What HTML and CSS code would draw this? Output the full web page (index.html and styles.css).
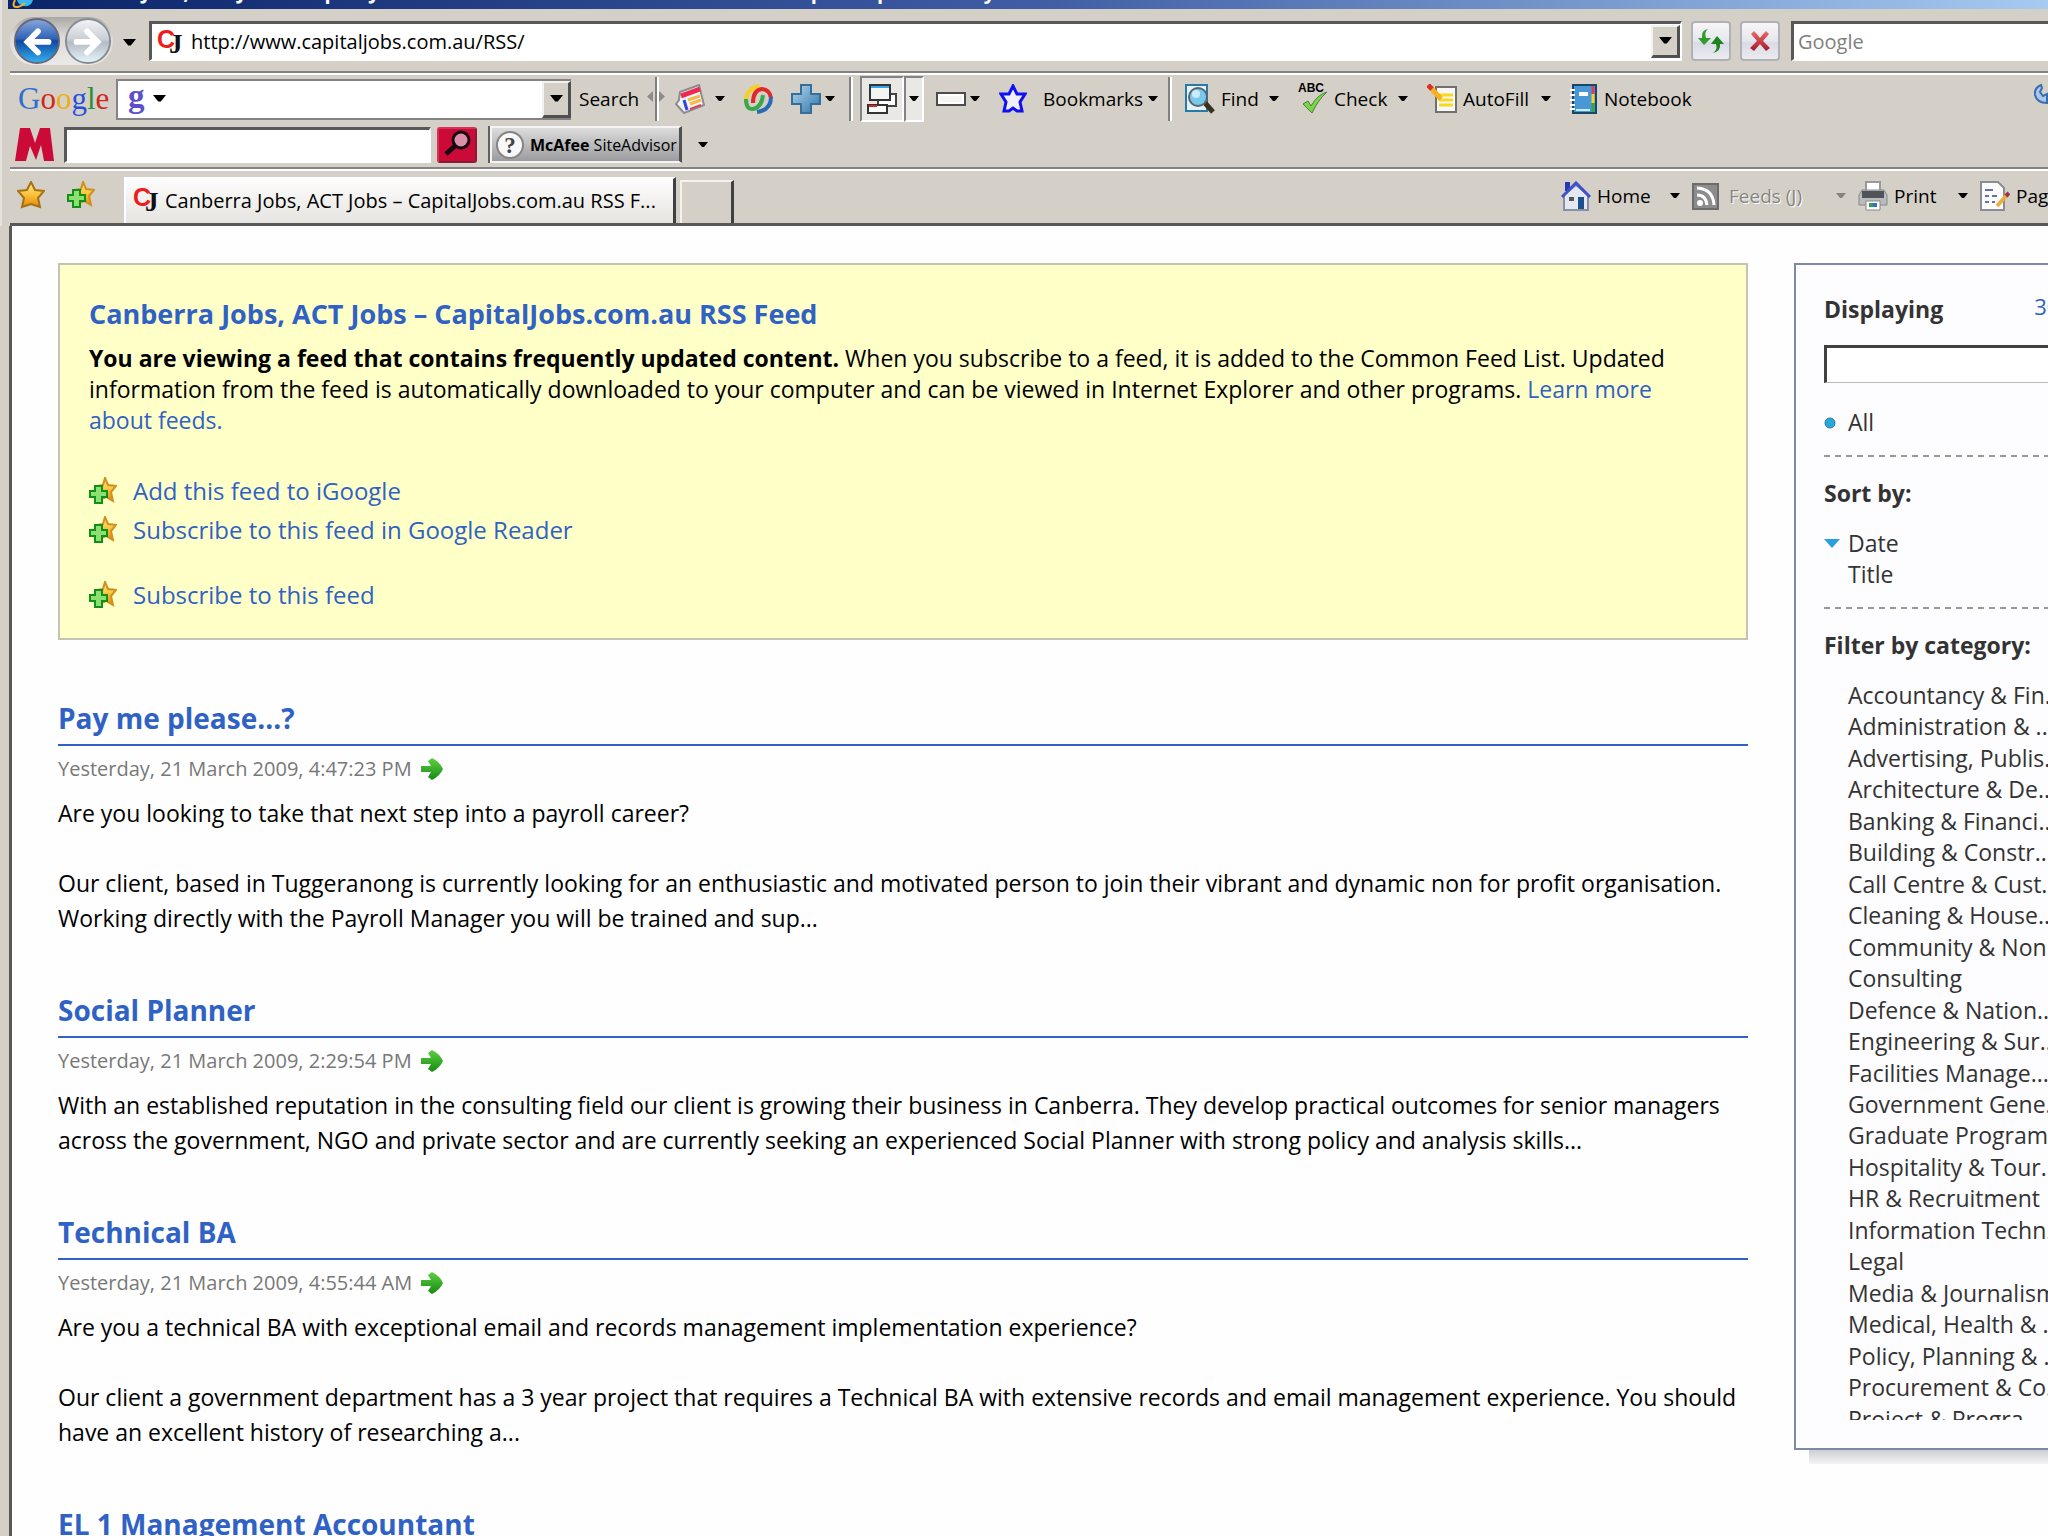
FILE: index.html
```
<!DOCTYPE html>
<html lang="en" dir="ltr">
  <head>
    <meta charset="utf-8">
    <title>Canberra Jobs, ACT Jobs – CapitalJobs.com.au RSS Feed</title>
    <link rel="stylesheet" href="styles.css">
  </head>
  <body>
    <svg class="defs" aria-hidden="true">
      <defs>
        <linearGradient id="gold" x1="0" y1="0" x2="0" y2="1"><stop offset="0" stop-color="#fff3a0"/><stop offset="0.5" stop-color="#fbc23a"/><stop offset="1" stop-color="#e08a10"/></linearGradient>
        <linearGradient id="blueBall" x1="0" y1="0" x2="0" y2="1"><stop offset="0" stop-color="#8ba9dc"/><stop offset="0.45" stop-color="#2f62b8"/><stop offset="0.5" stop-color="#0f47a0"/><stop offset="1" stop-color="#35b4f4"/></linearGradient>
        <linearGradient id="greyBall" x1="0" y1="0" x2="0" y2="1"><stop offset="0" stop-color="#f4f5f8"/><stop offset="0.48" stop-color="#c9ccd4"/><stop offset="0.52" stop-color="#b4bac4"/><stop offset="1" stop-color="#e6f6fc"/></linearGradient>
        <linearGradient id="plusBlue" x1="0" y1="0" x2="1" y2="1"><stop offset="0" stop-color="#b4d8ee"/><stop offset="1" stop-color="#2f74a8"/></linearGradient>
        <linearGradient id="greenArrow" x1="0" y1="0" x2="0" y2="1"><stop offset="0" stop-color="#5fd040"/><stop offset="1" stop-color="#168a14"/></linearGradient>
        <linearGradient id="redX" x1="0" y1="0" x2="0" y2="1"><stop offset="0" stop-color="#f06a68"/><stop offset="1" stop-color="#a01c28"/></linearGradient>
        <symbol id="caret" viewBox="0 0 10 6"><path d="M0 0H10L6 5H4Z" fill="currentColor"/></symbol>
        <symbol id="addstar" viewBox="0 0 28 28">
          <path d="M16 1L19 8L27 9L22 15L24 24L17 20L10 23L12 15L8 9L14 8Z" fill="url(#gold)" stroke="#d09020" stroke-width="2"/>
          <path d="M6 9H13V14H18V20H13V26H6V20H1V14H6Z" fill="#8ce070" stroke="#0f9018" stroke-width="2"/>
        </symbol>
        <symbol id="cj" viewBox="0 0 26 28">
          <text x="0" y="20" font-family="Liberation Sans Narrow, Liberation Sans" font-weight="bold" font-size="25" fill="#ee1c1c">C</text>
          <text x="12" y="25" font-family="Liberation Serif" font-weight="bold" font-size="27" fill="#111">J</text>
        </symbol>
        <symbol id="go" viewBox="0 0 24 24"><path d="M1 9H11L8 4L12 1Q20 5 23 12Q20 19 12 23L8 20L11 15H1Z" fill="url(#greenArrow)"/></symbol>
      </defs>
    </svg>

    <header class="chrome">
      <div class="titlebar">
        <svg class="ielogo" viewBox="0 0 24 9"><path d="M5 0H21Q19 7 12 6Q6 5 5 0Z" fill="#38b4f0"/><path d="M3 0Q-1 8 6 7Q10 6 13 3" fill="none" stroke="#f0b030" stroke-width="2"/></svg>
        <span class="titletext">Canberra Jobs, ACT Jobs – CapitalJobs.com.au RSS Feed – Windows Internet Explorer provided by</span>
      </div>

      <div class="navrow">
        <div class="travel">
          <button class="plain" aria-label="Back"><svg width="48" height="48" viewBox="0 0 50 50"><circle cx="25" cy="25" r="23" fill="url(#blueBall)" stroke="#667" stroke-width="2"/><path d="M37 26H16M26 15L15 26L26 37" fill="none" stroke="#fff" stroke-width="6" stroke-linecap="round"/></svg></button>
          <button class="plain" aria-label="Forward"><svg width="48" height="48" viewBox="0 0 50 50"><circle cx="25" cy="25" r="23" fill="url(#greyBall)" stroke="#888d94" stroke-width="2"/><path d="M13 26H34M24 15L35 26L24 37" fill="none" stroke="#fff" stroke-width="6" stroke-linecap="round"/></svg></button>
        </div>
        <button class="plain recent" aria-label="Recent pages"><svg class="caret big"><use href="#caret"/></svg></button>
        <div class="field address">
          <svg width="26" height="28"><use href="#cj"/></svg>
          <input class="bare" type="text" value="http://www.capitaljobs.com.au/RSS/" aria-label="Address">
          <button class="drop" aria-label="Show addresses"><svg class="caret big"><use href="#caret"/></svg></button>
        </div>
        <div class="navright">
          <button class="soft" aria-label="Refresh"><svg width="28" height="26" viewBox="0 0 28 26"><path d="M11 1Q7 4 9 10H14L7 17L1 10H5Q4 2 11 1Z" fill="#2f9c2c"/><path d="M16 25Q21 22 19 16H14L20 8L27 16H23Q24 23 16 25Z" fill="#1e8420"/></svg></button>
          <button class="soft" aria-label="Stop"><svg width="22" height="22" viewBox="0 0 22 22"><path d="M2 4L5 1Q9 5 11 8Q13 5 17 1L20 4L14 11L21 18L17 21L11 14L5 21L1 18L8 11Z" fill="url(#redX)"/></svg></button>
          <div class="field websearch"><input class="bare" type="text" placeholder="Google" aria-label="Search"></div>
        </div>
      </div>

      <div class="googlerow">
        <span class="glogo"><b class="gb">G</b><b class="gr">o</b><b class="gy">o</b><b class="gb2">g</b><b class="gg">l</b><b class="gr">e</b></span>
        <div class="gcombo">
          <span class="gmark">g</span><svg class="caret big"><use href="#caret"/></svg>
          <input class="bare" type="text" aria-label="Google search">
          <button class="drop" aria-label="Search history"><svg class="caret big"><use href="#caret"/></svg></button>
        </div>
        <button class="tool t-search">Search</button>
        <svg class="grip" width="18" height="44" viewBox="0 0 18 44"><path d="M9 0V44" stroke="#808080" stroke-width="2"/><path d="M11 0V44" stroke="#fff" stroke-width="2"/><path d="M6 14V25L0 19.500Z M12 14V25L18 19.500Z" fill="#8c8c8c"/></svg>
        <button class="tool t-news" aria-label="News"><svg width="30" height="30" viewBox="0 0 30 30"><path d="M5 8L24 1L29 21L9 29L1 20L4 16Z" fill="#f4f4f6" stroke="#8c8c90" stroke-width="2"/><path d="M6 12L25 5" stroke="#f02850" stroke-width="5"/><path d="M9 16L12 26" stroke="#3048e0" stroke-width="3"/><path d="M13 16L25 12M15 20L26 16" stroke="#f8b848" stroke-width="3"/><path d="M15 25L26 21" stroke="#e04060" stroke-width="2"/></svg><svg class="caret"><use href="#caret"/></svg></button>
        <button class="tool t-swirl" aria-label="Gadgets"><svg width="30" height="30" viewBox="0 0 30 30" fill="none" stroke-width="4"><path d="M16 2Q3 5 3 17" stroke="#f6d020"/><path d="M10 19Q10 6 19 5Q27 6 28 14" stroke="#e02828"/><path d="M28 13Q28 26 14 28" stroke="#2868b8"/><path d="M3 15Q3 26 10 25Q19 23 20 11" stroke="#38a848"/></svg></button>
        <button class="tool t-plus" aria-label="Add"><svg width="30" height="30" viewBox="0 0 30 30"><path d="M10 1H20V10H29V20H20V29H10V20H1V10H10Z" fill="url(#plusBlue)" stroke="#356f98" stroke-width="2"/></svg><svg class="caret"><use href="#caret"/></svg></button>
        <span class="vline"></span>
        <span class="pressed">
          <button class="sunk" aria-label="Popups"><svg width="30" height="30" viewBox="0 0 30 30"><path d="M11 10H29V22H11Z" fill="#fff" stroke="#444" stroke-width="2"/><path d="M1 21H20V29H1Z" fill="#fff" stroke="#333" stroke-width="2"/><path d="M2 22H10" stroke="#e02020" stroke-width="2"/><path d="M3 1H23V16H3Z" fill="#f4f4f4" stroke="#333" stroke-width="2"/><path d="M4 3H22" stroke="#30a8e0" stroke-width="2"/></svg></button>
          <button class="sunk thin" aria-label="Popup options"><svg class="caret"><use href="#caret"/></svg></button>
        </span>
        <button class="tool t-rect" aria-label="PageRank"><svg width="30" height="14" viewBox="0 0 30 14"><path d="M1 1H29V13H1Z" fill="#f4f4f0" stroke="#4c4c4c" stroke-width="2"/><path d="M3 3H27V11H3Z" fill="none" stroke="#fff" stroke-width="2"/></svg><svg class="caret"><use href="#caret"/></svg></button>
        <button class="tool t-book"><svg width="28" height="30" viewBox="0 0 28 30"><path d="M14 2L18 10H26L21 18L23 27H18L14 24L10 27H5L7 18L2 10H10Z" fill="#f0f0f8" stroke="#1010f4" stroke-width="3"/></svg><span>Bookmarks</span><svg class="caret"><use href="#caret"/></svg></button>
        <span class="vline"></span>
        <button class="tool t-find"><svg width="30" height="30" viewBox="0 0 30 30"><path d="M1 1H22V27H1Z" fill="#e4f2fa" stroke="#2878a8" stroke-width="2"/><path d="M20 19L28 28" stroke="#3a3020" stroke-width="5"/><circle cx="13" cy="13" r="9" fill="#78c8f0" stroke="#5c6468" stroke-width="2"/><circle cx="11" cy="10" r="4" fill="#c8ecfc"/></svg><span>Find</span><svg class="caret"><use href="#caret"/></svg></button>
        <button class="tool t-check"><svg width="30" height="32" viewBox="0 0 30 32"><text x="0" y="9" font-family="Liberation Sans" font-weight="bold" font-size="12">ABC</text><path d="M5 21L10 18L13 23Q20 11 29 9Q20 17 14 30Z" fill="#78d848" stroke="#4c7c3c" stroke-width="1"/></svg><span>Check</span><svg class="caret"><use href="#caret"/></svg></button>
        <button class="tool t-fill"><svg width="30" height="30" viewBox="0 0 30 30"><path d="M9 3H29V28H9Z" fill="#f8f8f4" stroke="#707070" stroke-width="2"/><path d="M12 11H26M12 16H26M12 21H26" stroke="#f8d820" stroke-width="3"/><path d="M3 3L14 15" stroke="#f8b020" stroke-width="5"/><path d="M1 1L5 5" stroke="#d83028" stroke-width="5"/></svg><span>AutoFill</span><svg class="caret"><use href="#caret"/></svg></button>
        <button class="tool t-note"><svg width="28" height="30" viewBox="0 0 28 30"><path d="M3 1H26V29H3Z" fill="#4898d8" stroke="#184868" stroke-width="2"/><path d="M23 2V10" stroke="#e03c60" stroke-width="3"/><path d="M23 10V19" stroke="#f8d028" stroke-width="3"/><path d="M23 19V28" stroke="#38a048" stroke-width="3"/><path d="M9 10H18" stroke="#fff" stroke-width="4"/><path d="M0 6H5M0 11H5M0 16H5M0 21H5M0 25H5" stroke="#fff" stroke-width="2"/><path d="M6 26H20" stroke="#c8f0fc" stroke-width="2"/></svg><span>Notebook</span></button>
        <button class="plain wrench" aria-label="Settings"><svg width="14" height="24" viewBox="0 0 14 24"><path d="M7 2Q0 5 1 12Q3 20 13 20V11L9 13L6 9L8 5Z" fill="#a8c8ec" stroke="#3c6cb0" stroke-width="2"/></svg></button>
      </div>

      <div class="mcrow">
        <svg width="40" height="34" viewBox="0 0 40 34"><path d="M5 0H15L20 15L25 0H35L39 33H29L26 17L21 32L15 18L11 33H0Z" fill="#cc0a38"/></svg>
        <div class="field mcfield"><input class="bare" type="text" aria-label="McAfee search"></div>
        <button class="mcgo" aria-label="Secure search"><svg width="30" height="28" viewBox="0 0 30 28"><circle cx="18" cy="11" r="8" fill="#dc90a8" stroke="#180810" stroke-width="3"/><path d="M12 17L3 25" stroke="#180810" stroke-width="5"/></svg></button>
        <button class="advisor"><svg width="30" height="32" viewBox="0 0 30 32"><circle cx="15" cy="16" r="13" fill="#f8f8f8" stroke="#848484" stroke-width="2"/><text x="15" y="24" text-anchor="middle" font-family="Liberation Serif" font-weight="bold" font-size="23" fill="#444">?</text></svg><span><b>McAfee</b> SiteAdvisor</span></button>
        <button class="plain mcmore" aria-label="SiteAdvisor menu"><svg class="caret"><use href="#caret"/></svg></button>
      </div>

      <div class="tabrow">
        <button class="plain fav" aria-label="Favorites"><svg width="28" height="28" viewBox="0 0 28 28"><path d="M14 1L18 9L27 10L21 17L23 26L14 23L5 26L7 17L1 10L10 9Z" fill="url(#gold)" stroke="#a87010" stroke-width="2"/></svg></button>
        <button class="plain addfav" aria-label="Add to Favorites"><svg width="28" height="28"><use href="#addstar"/></svg></button>
        <button class="tab"><svg width="26" height="28"><use href="#cj"/></svg><span>Canberra Jobs, ACT Jobs – CapitalJobs.com.au RSS F...</span></button>
        <button class="newtab" aria-label="New tab"></button>
        <div class="commands">
          <button class="tool c-home"><svg width="30" height="30" viewBox="0 0 30 30"><path d="M4 1H9V10H4Z" fill="#2838b0"/><path d="M3 14L15 4L27 14V29H3Z" fill="#e4e8f0" stroke="#8890a8" stroke-width="2"/><path d="M1 16L15 2L29 16" fill="none" stroke="#3c50c8" stroke-width="3"/><path d="M17 16H23V28H17Z" fill="#1c5090"/><path d="M8 16H13V20H8Z" fill="#555"/></svg><span>Home</span><svg class="caret"><use href="#caret"/></svg></button>
          <button class="tool c-feeds" disabled><svg width="28" height="28" viewBox="0 0 28 28"><path d="M1 2H26V27H1Z" fill="#8c8c8c" stroke="#6c6c6c" stroke-width="2"/><circle cx="8" cy="21" r="3" fill="#fff"/><path d="M5 13Q14 13 15 23M5 6Q21 7 22 23" fill="none" stroke="#fff" stroke-width="3"/></svg><span>Feeds (J)</span><svg class="caret"><use href="#caret"/></svg></button>
          <button class="tool c-print"><svg width="30" height="30" viewBox="0 0 30 30"><path d="M8 1H22V12H8Z" fill="#fff" stroke="#999" stroke-width="2"/><path d="M4 9H26L29 14V24H1V14Z" fill="#b8bcc0" stroke="#84888c" stroke-width="1"/><path d="M4 10H26V17H4Z" fill="#505458"/><path d="M8 20H22V29H8Z" fill="#fff" stroke="#888" stroke-width="1"/><path d="M11 24H15" stroke="#30a050" stroke-width="4"/><path d="M15 24H19" stroke="#3070d0" stroke-width="4"/></svg><span>Print</span><svg class="caret"><use href="#caret"/></svg></button>
          <button class="tool c-page"><svg width="30" height="30" viewBox="0 0 30 30"><path d="M1 1H18L24 7V29H1Z" fill="#fbfbfb" stroke="#8c8c94" stroke-width="2"/><path d="M5 9H13M5 15H9M12 15H17M5 21H9M12 21H15" stroke="#6870a8" stroke-width="2"/><path d="M17 25L27 14" stroke="#e8b040" stroke-width="4"/><path d="M26 15L29 12" stroke="#a03048" stroke-width="4"/></svg><span>Page</span></button>
        </div>
      </div>
    </header>

    <div class="page">
      <main class="content">
        <section class="feedbox">
          <h1>Canberra Jobs, ACT Jobs – CapitalJobs.com.au RSS Feed</h1>
          <p><b>You are viewing a feed that contains frequently updated content.</b> When you subscribe to a feed, it is added to the Common Feed List. Updated information from the feed is automatically downloaded to your computer and can be viewed in Internet Explorer and other programs. <a href="#">Learn more about feeds.</a></p>
          <ul class="sublinks">
            <li><svg width="28" height="28"><use href="#addstar"/></svg><a href="#">Add this feed to iGoogle</a></li>
            <li><svg width="28" height="28"><use href="#addstar"/></svg><a href="#">Subscribe to this feed in Google Reader</a></li>
            <li class="last"><svg width="28" height="28"><use href="#addstar"/></svg><a href="#">Subscribe to this feed</a></li>
          </ul>
        </section>

        <article>
          <h2><a href="#">Pay me please...?</a></h2>
          <div class="date">Yesterday, 21 March 2009, 4:47:23 PM <a href="#" aria-label="Open item"><svg width="24" height="24"><use href="#go"/></svg></a></div>
          <p>Are you looking to take that next step into a payroll career?<br><br>Our client, based in Tuggeranong is currently looking for an enthusiastic and motivated person to join their vibrant and dynamic non for profit organisation. Working directly with the Payroll Manager you will be trained and sup...</p>
        </article>
        <article>
          <h2><a href="#">Social Planner</a></h2>
          <div class="date">Yesterday, 21 March 2009, 2:29:54 PM <a href="#" aria-label="Open item"><svg width="24" height="24"><use href="#go"/></svg></a></div>
          <p>With an established reputation in the consulting field our client is growing their business in Canberra. They develop practical outcomes for senior managers across the government, NGO and private sector and are currently seeking an experienced Social Planner with strong policy and analysis skills...</p>
        </article>
        <article>
          <h2><a href="#">Technical BA</a></h2>
          <div class="date">Yesterday, 21 March 2009, 4:55:44 AM <a href="#" aria-label="Open item"><svg width="24" height="24"><use href="#go"/></svg></a></div>
          <p>Are you a technical BA with exceptional email and records management implementation experience?<br><br>Our client a government department has a 3 year project that requires a Technical BA with extensive records and email management experience. You should have an excellent history of researching a...</p>
        </article>
        <article>
          <h2><a href="#">EL 1 Management Accountant</a></h2>
        </article>
      </main>

      <aside class="side">
        <div class="panel">
          <div class="displaying"><h3><label for="filter">Displaying</label></h3><span>30 / 30</span></div>
          <input class="filter" id="filter" type="text">
          <a class="opt all" href="#"><svg width="12" height="12" viewBox="0 0 12 12"><circle cx="6" cy="6" r="5" fill="#28a8d8" stroke="#2878b0" stroke-width="1"/></svg>All</a>
          <hr>
          <h3>Sort by:</h3>
          <a class="opt" href="#"><svg width="16" height="9" viewBox="0 0 16 9"><path d="M0 0H16L8 9Z" fill="#28a0dc"/></svg>Date</a>
          <a class="opt" href="#">Title</a>
          <hr>
          <h3>Filter by category:</h3>
          <div class="clip">
            <ul class="cats">
              <li>Accountancy &amp; Fin...</li>
              <li>Administration &amp; ...</li>
              <li>Advertising, Publis...</li>
              <li>Architecture &amp; De...</li>
              <li>Banking &amp; Financi...</li>
              <li>Building &amp; Constr...</li>
              <li>Call Centre &amp; Cust...</li>
              <li>Cleaning &amp; House...</li>
              <li>Community &amp; Non...</li>
              <li>Consulting</li>
              <li>Defence &amp; Nation...</li>
              <li>Engineering &amp; Sur...</li>
              <li>Facilities Manage...</li>
              <li>Government Gene...</li>
              <li>Graduate Program...</li>
              <li>Hospitality &amp; Tour...</li>
              <li>HR &amp; Recruitment</li>
              <li>Information Techn...</li>
              <li>Legal</li>
              <li>Media &amp; Journalism</li>
              <li>Medical, Health &amp; ...</li>
              <li>Policy, Planning &amp; ...</li>
              <li>Procurement &amp; Co...</li>
              <li>Project &amp; Progra...</li>
            </ul>
          </div>
        </div>
        <div class="shadow"></div>
      </aside>
    </div>
  </body>
</html>
```
FILE: styles.css
```
*{box-sizing: border-box;}
html, body{
  height: 100%;
}
body{
  margin: 0;
  overflow: hidden;
  background-color: #d4d0c8;
  color: #000;
  font-family: "Open Sans", "Noto Sans", sans-serif;
  font-size: 23px;
  display: flex;
  flex-direction: column;
}
button, input{
  font-family: inherit;
  font-size: inherit;
  color: inherit;
}
svg{
  flex: none;
}
a{
  color: #2f62c4;
  text-decoration: none;
}
.defs{
  position: absolute;
  width: 0;
  height: 0;
}

/* browser toolbars */
.chrome{
  flex: none;
  padding-left: 8px;
  font-size: 20px;
  white-space: nowrap;
  border-left: 2px solid #e4e2dc;
}
.titlebar{
  height: 9px;
  margin-left: -2px;
  padding-left: 4px;
  overflow: hidden;
  display: flex;
  align-items: flex-end;
  gap: 8px;
  background: linear-gradient(90deg, #0a246a, #3f5ca4 50%, #a6caf0);
  color: #fff;
}
.ielogo{
  width: 24px;
  height: 9px;
}
.titletext{
  font-weight: bold;
  line-height: 34px;
}
.plain, .tool{
  border: none;
  padding: 0;
  background: none;
  display: flex;
  align-items: center;
}
.tool{font-size: 19px;}
.caret{
  width: 10px;
  height: 6px;
}
.caret.big{
  width: 13px;
  height: 8px;
}
.bare{
  flex: 1;
  min-width: 0;
  border: none;
  outline: none;
  padding: 0;
  background: none;
}
.bare::placeholder{
  color: #808080;
  opacity: 1;
}
.field{
  display: flex;
  align-items: center;
  background-color: #fff;
  border: 2px solid #fff;
  border-top: 3px solid #585858;
  border-left: 3px solid #585858;
}
.drop{
  width: 29px;
  height: 33px;
  padding: 0;
  background-color: #d4d0c8;
  border: 2px solid #f4f2ee;
  border-right: 3px solid #505050;
  border-bottom: 3px solid #505050;
  display: flex;
  align-items: center;
  justify-content: center;
}
.navrow{
  height: 64px;
  padding-top: 2px;
  display: flex;
  align-items: center;
  border-bottom: 2px solid #848280;
  box-shadow: 0 2px #fff;
}
.travel{
  display: flex;
  gap: 3px;
  padding: 0 1px 0 3px;
  border-radius: 26px;
  background: linear-gradient(#a8a8a6, #dcdad6 40%, #eceae8);
}
.recent{
  margin: 3px 13px 0 10px;
}
.address{
  flex: 1;
  height: 40px;
  gap: 8px;
  padding-left: 5px;
}
.navright{
  width: 366px;
  display: flex;
  align-items: center;
  gap: 9px;
  padding-left: 9px;
  overflow: hidden;
}
.soft{
  flex: none;
  width: 40px;
  height: 40px;
  padding: 0;
  border: 2px solid #b0b0b6;
  border-radius: 4px;
  background: linear-gradient(#f6f6f8, #e6e7ee 50%, #d8dae6 55%, #ececf0);
  display: flex;
  align-items: center;
  justify-content: center;
}
.websearch{
  flex: 1;
  height: 40px;
  margin-left: 2px;
  padding-left: 4px;
  border-right: none;
}
.googlerow{
  height: 50px;
  padding-top: 2px;
  display: flex;
  align-items: center;
}
.glogo{
  width: 106px;
  padding-left: 8px;
  font-family: "Liberation Serif", serif;
  font-size: 31px;
  line-height: 40px;
}
.glogo b{font-weight: normal;}
.gb{color: #2f6fd0;}
.gb2{color: #2850d8;}
.gr{color: #d02820;}
.gy{color: #eab010;}
.gg{color: #2c9038;}
.gcombo{
  width: 455px;
  height: 41px;
  padding-left: 10px;
  background-color: #fff;
  border: 2px solid #848284;
  border-right: none;
  display: flex;
  align-items: center;
  gap: 8px;
}
.gcombo .drop{
  height: 37px;
}
.gmark{
  font-family: "Liberation Serif", serif;
  font-size: 33px;
  font-weight: bold;
  line-height: 30px;
  padding-bottom: 6px;
  color: #5b50cc;
}
.t-search{
  width: 68px;
  margin-left: 8px;
}
.grip{margin-right: 10px;}
.t-news{width: 68px; gap: 10px;}
.t-swirl{width: 48px;}
.t-plus{width: 58px; gap: 4px;}
.t-rect{width: 63px; gap: 4px;}
.t-book{width: 169px;}
.t-book span{margin: 0 5px 0 16px;}
.t-find{width: 113px;}
.t-check{width: 129px;}
.t-fill{width: 143px;}
.t-find span, .t-check span, .t-fill span, .t-note span{
  flex: 1;
  margin-left: 6px;
  text-align: left;
}
.t-find .caret, .t-check .caret, .t-fill .caret{margin-right: 19px;}
.t-note{width: 130px;}
.vline{
  width: 4px;
  height: 44px;
  border-left: 2px solid #808080;
  border-right: 2px solid #fff;
}
.pressed{
  display: flex;
  margin: 0 12px 0 7px;
}
.sunk{
  width: 44px;
  height: 46px;
  padding: 0;
  background-color: #eae8e4;
  border: 2px solid #fff;
  border-top-color: #848284;
  border-left-color: #848284;
  display: flex;
  align-items: center;
  justify-content: center;
}
.sunk.thin{width: 20px;}
.vline + .t-find{margin-left: 13px;}
.wrench{
  margin-left: auto;
  margin-bottom: 8px;
}
.mcrow{
  height: 46px;
  padding: 0 0 1px 5px;
  display: flex;
  align-items: center;
  border-bottom: 2px solid #848280;
  box-shadow: 0 2px #fff;
}
.mcfield{
  width: 367px;
  height: 36px;
  margin-left: 9px;
}
.mcgo{
  width: 40px;
  height: 36px;
  margin-left: 6px;
  padding: 0 0 0 2px;
  border: 2px outset #d83058;
  border-radius: 3px;
  background-color: #cc0a38;
}
.advisor{
  width: 192px;
  height: 37px;
  margin-left: 13px;
  padding: 0 4px 0 3px;
  border: 2px solid #f4f4f4;
  border-right: 3px solid #505050;
  box-shadow: -2px 0 #606060;
  background: linear-gradient(#dcdcdc, #9c9c9e);
  display: flex;
  align-items: center;
  gap: 5px;
  font-size: 16px;
}
.mcmore{margin-left: 16px;}
.tabrow{
  height: 57px;
  padding-left: 7px;
  display: flex;
  align-items: flex-end;
  border-bottom: 3px solid #585858;
}
.fav, .addfav{
  margin-bottom: 14px;
}
.addfav{margin-left: 22px;}
.tab{
  width: 552px;
  height: 46px;
  margin-left: 29px;
  padding: 0 3px 2px 7px;
  border: 2px solid #fff;
  border-right: 3px solid #404040;
  border-bottom: none;
  background: linear-gradient(#fdfdfd, #e6e4e0);
  display: flex;
  align-items: center;
  gap: 6px;
}
.newtab{
  width: 54px;
  height: 43px;
  margin-left: 4px;
  background-color: #d4d0c8;
  border: 2px solid #f4f2ee;
  border-right: 3px solid #404040;
  border-bottom: none;
}
.commands{
  width: 487px;
  height: 54px;
  margin-left: auto;
  display: flex;
  align-items: center;
  overflow: hidden;
}
.commands .tool{flex: none;}
.commands .tool span{
  flex: 1;
  margin-left: 6px;
  text-align: left;
}
.c-home{width: 119px;}
.c-feeds{width: 154px;}
.c-print{width: 110px;}
.commands .c-feeds span{margin-left: 9px;}
.c-feeds:disabled{
  color: #86847f;
  text-shadow: 1px 1px #fff;
}
.c-feeds, .c-print, .c-page{margin-left: 12px;}

/* page */
.page{
  flex: 1;
  min-height: 0;
  margin-left: 9px;
  padding: 37px 0 0 46px;
  border-left: 3px solid #585858;
  background-color: #fefefe;
  display: flex;
  gap: 46px;
  overflow: hidden;
}
.content{
  flex: 1;
  min-width: 0;
}
.feedbox{
  padding: 31px 40px 28px 29px;
  border: 2px solid #c4c4b4;
  background-color: #ffffc8;
}
h1, h2, h3, p, ul{
  margin: 0;
  padding: 0;
}
ul{list-style: none;}
h1, h2{
  color: #2f62c4;
  font-size: 27px;
  line-height: 36px;
}
.feedbox p{
  margin-top: 11px;
  line-height: 31px;
}
.sublinks{
  margin-top: 39px;
  font-size: 24px;
}
.sublinks li{
  display: flex;
  align-items: center;
  gap: 16px;
  line-height: 31px;
  margin-bottom: 8px;
}
.sublinks li.last{
  margin: 34px 0 0;
}
article{
  margin-top: 60px;
}
article + article{
  margin-top: 56px;
}
h2{
  padding-bottom: 8px;
  border-bottom: 2px solid #2f62c4;
  font-size: 28px;
}
.date{
  margin: 8px 0 12px;
  display: flex;
  align-items: center;
  gap: 8px;
  color: #787878;
  font-size: 20px;
  line-height: 30px;
}
.date a, .date svg{
  display: block;
}
article p{
  line-height: 35px;
}

/* filter panel, runs off the right edge of the window */
.side{
  flex: none;
  width: 254px;
  overflow: hidden;
}
.panel{
  width: 340px;
  padding: 28px;
  border: 2px solid #8088a8;
  background-color: #fdfcfe;
  color: #333;
}
.shadow{
  width: 340px;
  height: 14px;
  margin-left: 15px;
  background: linear-gradient(#cccfd2, #f4f3f5);
}
h3{
  font-size: 23px;
  line-height: 32px;
}
.displaying{
  display: flex;
  justify-content: space-between;
}
.displaying span{
  color: #2f62c4;
  font-size: 22px;
  line-height: 26px;
}
.filter{
  display: block;
  width: 100%;
  height: 38px;
  margin: 20px 0 24px;
  border: 1px solid #bbb;
  border-top: 3px solid #404040;
  border-left: 3px solid #404040;
  background-color: #fff;
}
.opt{
  display: grid;
  grid-template-columns: 24px 1fr;
  align-items: center;
  color: #333;
  line-height: 31px;
}
.opt:not(:has(svg)){
  padding-left: 24px;
  display: block;
}
hr{
  height: 2px;
  margin: 17px 0 20px;
  border: none;
  background: repeating-linear-gradient(90deg, #999 0 6px, transparent 6px 11px);
}
h3 + .opt{
  margin-top: 19px;
}
.clip{
  height: 740px;
  margin-top: 19px;
  padding-left: 24px;
  overflow: hidden;
}
.cats{
  height: 755px;
  display: grid;
  grid-auto-rows: 1fr;
  line-height: 31px;
  white-space: nowrap;
}
```
